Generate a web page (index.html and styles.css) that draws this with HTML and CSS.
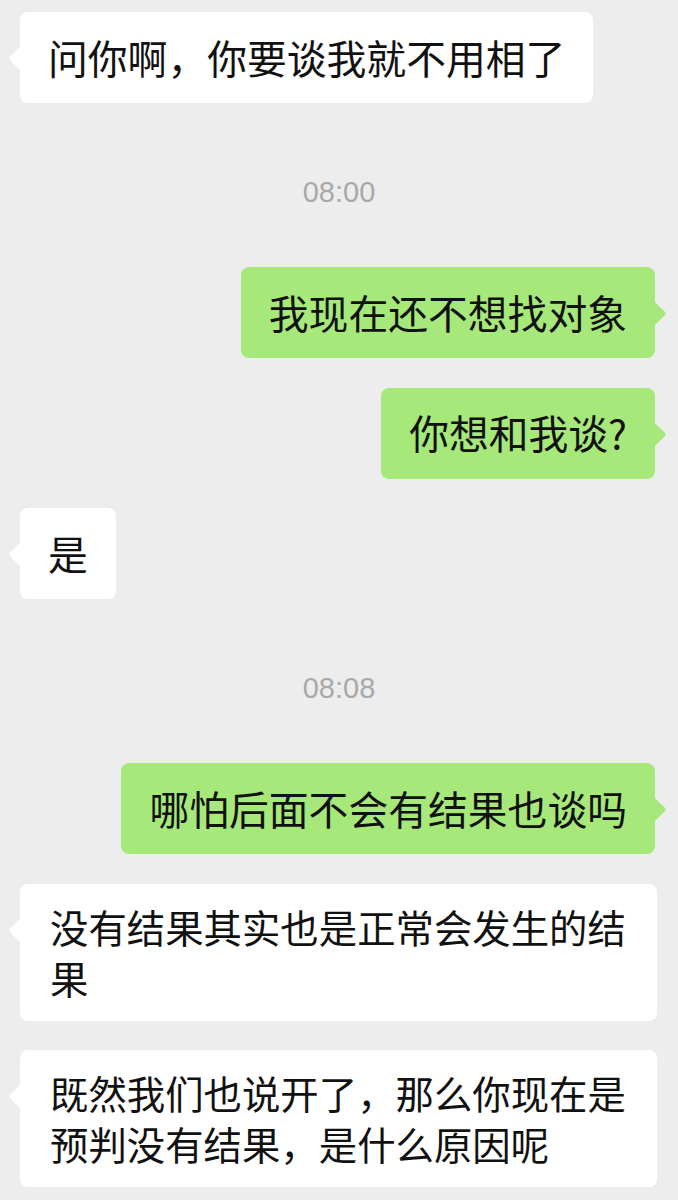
FILE: index.html
```html
<!DOCTYPE html>
<html>
<head>
    <meta charset="utf-8">
    <title>聊天记录</title>
    <link rel="stylesheet" href="styles.css">
</head>
<body>

<div class="chat">

    <div class="msg left"><div class="bubble">问你啊，你要谈我就不用相了</div></div>

    <div class="time">08:00</div>

    <div class="msg right"><div class="bubble">我现在还不想找对象</div></div>
    <div class="msg right"><div class="bubble">你想和我谈?</div></div>
    <div class="msg left"><div class="bubble">是</div></div>

    <div class="time">08:08</div>

    <div class="msg right"><div class="bubble">哪怕后面不会有结果也谈吗</div></div>
    <div class="msg left"><div class="bubble long">没有结果其实也是正常会发生的结果</div></div>
    <div class="msg left"><div class="bubble long">既然我们也说开了，那么你现在是预判没有结果，是什么原因呢</div></div>

</div>

</body>
</html>
```

FILE: styles.css
```css
BODY {
    margin : 0;
    background-color : #ededed;
    font-family : "Noto Sans CJK SC", "Liberation Sans", sans-serif;
    color : #111;
}

.chat {
    display : flex;
    flex-direction : column;
    padding-top : 12px;
}

/* message rows */
.msg {
    display : flex;
    padding : 0 21px 0 20px;
}
.msg + .msg {
    margin-top : 29.5px;
}
.msg.left {
    justify-content : flex-start;
}
.msg.right {
    justify-content : flex-end;
    padding-right : 23px;
}

/* bubbles */
.bubble {
    position : relative;
    background-color : #fff;
    border-radius : 8px;
    font-size : 39.8px;
    line-height : 50px;
    padding : 19.5px 28px 21.5px;
    max-width : 100%;
    box-sizing : border-box;
}
.bubble.long {
    font-size : 38.4px;
    line-height : 51px;
    padding : 17px 30px 18px;
}
.right .bubble {
    background-color : #a6e87a;
}

/* the little tail */
.bubble::before {
    content : "";
    position : absolute;
    top : 38px;
    width : 17px;
    height : 17px;
    background-color : inherit;
    border-radius : 2px;
    transform : rotate(45deg);
}
.left .bubble::before {
    left : -8px;
}
.right .bubble::before {
    right : -8px;
}

/* time stamps */
.time {
    font-family : "Liberation Sans", sans-serif;
    font-size : 29px;
    line-height : 34px;
    color : #a9a9a9;
    text-align : center;
    margin : 72px 0 58px;
}
```
